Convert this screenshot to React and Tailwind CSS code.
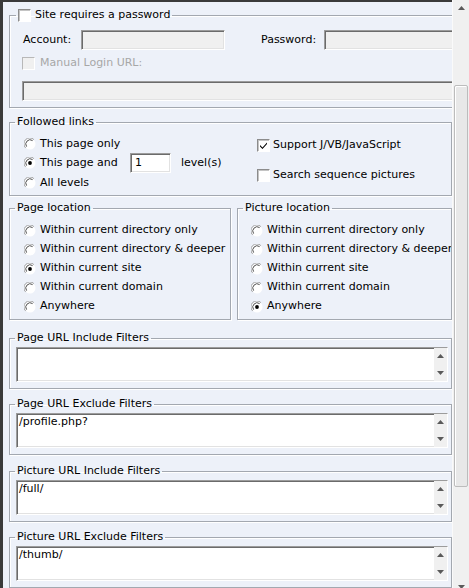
import React from "react";

const sunken =
  "border border-t-[#9c9c9c] border-l-[#9c9c9c] border-b-white border-r-white shadow-[inset_1px_1px_0_#6b6b6b,inset_-1px_-1px_0_#e2e2e2]";
const groupBox =
  "min-w-0 border border-[#a3a8b0] shadow-[inset_1px_1px_0_#ffffff,1px_1px_0_#ffffff]";

function Radio({ checked }) {
  return (
    <svg width="12" height="12" viewBox="0 0 12 12" className="shrink-0">
      <circle cx="6" cy="6" r="5.5" fill="#ffffff" />
      <path d="M1.6 9.9 A5.5 5.5 0 0 1 9.9 1.6" stroke="#a0a0a0" strokeWidth="1" fill="none" />
      <path d="M2.6 8.6 A4.3 4.3 0 0 1 8.6 2.6" stroke="#505050" strokeWidth="1" fill="none" />
      {checked && <circle cx="6" cy="6" r="1.9" fill="#000000" />}
    </svg>
  );
}

function Check({ checked, disabled }) {
  return (
    <span
      className={
        disabled
          ? "w-[13px] h-[13px] shrink-0 border border-t-[#b8b8b8] border-l-[#b8b8b8] border-b-white border-r-white bg-[#f0f0f0]"
          : "w-[13px] h-[13px] shrink-0 border border-t-[#8c8c8c] border-l-[#8c8c8c] border-b-white border-r-white bg-white shadow-[inset_1px_1px_0_#c4c4c4] flex items-center justify-center"
      }
    >
      {checked && (
        <svg width="9" height="9" viewBox="0 0 9 9">
          <path d="M1 4 L3.5 6.5 L8 1.5 L8 3 L3.5 8 L1 5.5 Z" fill="#000000" />
        </svg>
      )}
    </span>
  );
}

function Arrow({ down }) {
  return (
    <svg width="7" height="4" viewBox="0 0 7 4">
      <path d={down ? "M0 0 H7 L3.5 4 Z" : "M0 4 H7 L3.5 0 Z"} fill="#5a5a5a" />
    </svg>
  );
}

function RadioRow({ label, checked }) {
  return (
    <div className="h-[19px] flex items-center gap-[4px] whitespace-nowrap">
      <Radio checked={checked} />
      <span>{label}</span>
    </div>
  );
}

function FilterGroup({ title, value, top }) {
  return (
    <fieldset className={`${groupBox} ml-[6px] w-[443px] ${top}`}>
      <legend className="ml-[5px] px-[2px] leading-[14px]">{title}</legend>
      <div className={`${sunken} mt-[2px] ml-[6px] mr-[3px] mb-[6px] h-[35px] bg-white flex`}>
        <div className="flex-1 pl-[2px] pt-[1px] leading-[14px]">{value}</div>
        <div className="w-[13px] bg-[#f0f0f0] flex flex-col items-center justify-between py-[6px]">
          <Arrow />
          <Arrow down />
        </div>
      </div>
    </fieldset>
  );
}

const pageLocations = [
  "Within current directory only",
  "Within current directory & deeper",
  "Within current site",
  "Within current domain",
  "Anywhere",
];

export default function App() {
  return (
    <div className="w-[469px] h-[588px] flex overflow-hidden bg-[#edf1f9] text-black text-[11px] font-['DejaVu_Sans',sans-serif]">
      <div className="w-[452px] h-full overflow-hidden border-t-2 border-l-[3px] border-[#3a3a3a]">
        {/* Password */}
        <fieldset className={`${groupBox} ml-[6px] mt-[6px] w-[480px]`}>
          <legend className="ml-[6px] px-[2px] leading-[14px]">
            <span className="flex items-center gap-[4px]">
              <Check />
              Site requires a password
            </span>
          </legend>
          <div className="mt-[8px] h-[20px] flex items-center pl-[13px]">
            <span className="w-[58px]">Account:</span>
            <div className={`${sunken} w-[144px] h-[20px] bg-[#f0f0f0]`} />
            <span className="ml-[36px] w-[63px]">Password:</span>
            <div className={`${sunken} w-[140px] h-[20px] bg-[#f0f0f0]`} />
          </div>
          <div className="mt-[6px] h-[14px] flex items-center gap-[5px] pl-[12px] text-[#a7a7a7]">
            <Check disabled />
            Manual Login URL:
          </div>
          <div className={`${sunken} mt-[11px] mb-[6px] ml-[12px] w-[460px] h-[20px] bg-[#f0f0f0]`} />
        </fieldset>

        {/* Followed links */}
        <fieldset className={`${groupBox} ml-[6px] mt-[7px] w-[443px]`}>
          <legend className="ml-[5px] px-[2px] leading-[14px]">Followed links</legend>
          <div className="flex pb-[5px]">
            <div className="w-[247px] pl-[14px]">
              <div className="mt-[8px] h-[14px] flex items-center gap-[4px]">
                <Radio />
                This page only
              </div>
              <div className="mt-[2px] h-[20px] flex items-center gap-[4px]">
                <Radio checked />
                <span className="w-[86px]">This page and</span>
                <div className={`${sunken} w-[41px] h-[20px] bg-white pl-[4px] leading-[18px]`}>1</div>
                <span className="ml-[6px]">level(s)</span>
              </div>
              <div className="mt-[3px] h-[14px] flex items-center gap-[4px]">
                <Radio />
                All levels
              </div>
            </div>
            <div>
              <div className="mt-[9px] h-[14px] flex items-center gap-[3px]">
                <Check checked />
                Support J/VB/JavaScript
              </div>
              <div className="mt-[16px] h-[14px] flex items-center gap-[3px]">
                <Check />
                Search sequence pictures
              </div>
            </div>
          </div>
        </fieldset>

        {/* Locations */}
        <div className="ml-[6px] mt-[5px] flex gap-[6px]">
          <fieldset className={`${groupBox} w-[222px] overflow-hidden`}>
            <legend className="ml-[5px] px-[2px] leading-[14px]">Page location</legend>
            <div className="mt-[6px] pb-[3px] pl-[14px]">
              {pageLocations.map((l, i) => (
                <RadioRow key={l} label={l} checked={i === 2} />
              ))}
            </div>
          </fieldset>
          <fieldset className={`${groupBox} w-[215px] overflow-hidden`}>
            <legend className="ml-[5px] px-[2px] leading-[14px]">Picture location</legend>
            <div className="mt-[6px] pb-[3px] pl-[13px]">
              {pageLocations.map((l, i) => (
                <RadioRow key={l} label={l} checked={i === 4} />
              ))}
            </div>
          </fieldset>
        </div>

        <FilterGroup title="Page URL Include Filters" value="" top="mt-[11px]" />
        <FilterGroup title="Page URL Exclude Filters" value="/profile.php?" top="mt-[8px]" />
        <FilterGroup title="Picture URL Include Filters" value="/full/" top="mt-[9px]" />
        <FilterGroup title="Picture URL Exclude Filters" value="/thumb/" top="mt-[8px]" />
      </div>

      {/* Scrollbar */}
      <div className="w-[17px] h-[600px] shrink-0 bg-[#f0f0f0] border-l border-[#fafafa] flex flex-col items-center">
        <div className="h-[16px] flex items-center justify-center">
          <Arrow />
        </div>
        <div className="mt-[69px] w-[14px] h-[402px] rounded-[2px] border border-[#bcbcbc] bg-[#e8e8e8] shadow-[inset_1px_1px_0_#ffffff]" />
        <div className="flex-1" />
        <div className="h-[18px] flex items-start pt-[3px] justify-center">
          <Arrow down />
        </div>
      </div>
    </div>
  );
}
